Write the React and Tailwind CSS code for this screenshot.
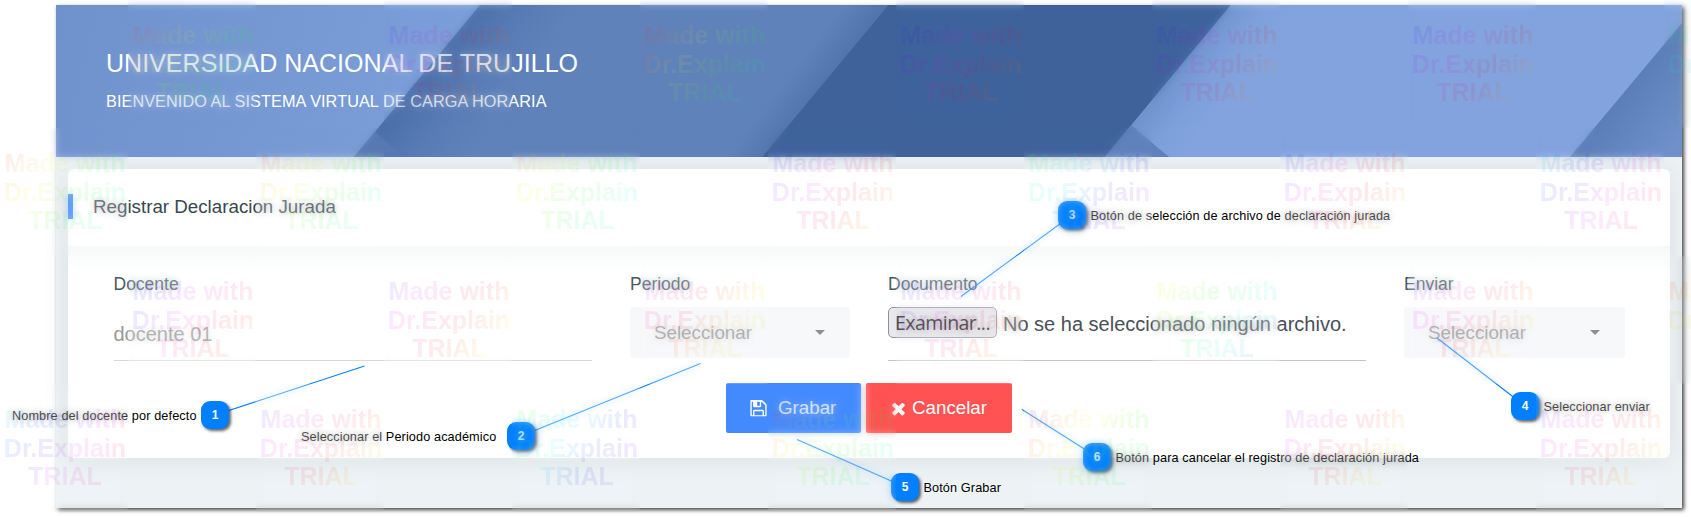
const WATERMARKS = [
  [128, 0, 355], [384, 0, 245], [640, 0, 350], [896, 0, 225], [1152, 0, 235], [1408, 0, 235], [1664, 0, 120],
  [0, 128, 0], [256, 128, 0], [512, 128, 15], [768, 128, 230], [1024, 128, 120], [1280, 128, 235], [1536, 128, 185],
  [128, 256, 215], [384, 256, 245], [640, 256, 280], [896, 256, 225], [1152, 256, 45], [1408, 256, 250], [1664, 256, 0],
  [0, 384, 180], [256, 384, 245], [512, 384, 110], [768, 384, 0], [1024, 384, 345], [1280, 384, 260], [1536, 384, 245],
];

function rainbow(start) {
  const stops = [];
  for (let i = 0; i <= 8; i++) stops.push(`hsl(${start + i * 25} 100% 52%)`);
  return `linear-gradient(130deg, ${stops.join(", ")})`;
}

function Watermark({ x, y, hue }) {
  return (
    <div className="absolute h-32 w-32" style={{ left: x, top: y }}>
      <div className="absolute inset-0 opacity-[0.37] backdrop-blur-[3.5px]" />
      <div className="relative flex h-full items-center justify-center pl-[2px]">
        <div
          className="bg-clip-text text-center text-[25px] leading-[28.7px] font-bold whitespace-nowrap text-transparent opacity-[0.085]"
          style={{ backgroundImage: rainbow(hue) }}
        >
          Made with
          <br />
          Dr.Explain
          <br />
          TRIAL
        </div>
      </div>
    </div>
  );
}

const NOTES = [
  { n: 1, x: 201, y: 401, tx: 364.5, ty: 366, text: "Nombre del docente por defecto", left: true, w: 189 },
  { n: 2, x: 507, y: 422, tx: 700.5, ty: 363.5, text: "Seleccionar el Periodo académico", left: true, w: 206 },
  { n: 3, x: 1058, y: 201, tx: 961, ty: 296.5, text: "Botón de selección de archivo de declaración jurada" },
  { n: 4, x: 1511, y: 392, tx: 1437, ty: 338, text: "Seleccionar enviar" },
  { n: 5, x: 891, y: 473, tx: 797, ty: 439.5, text: "Botón Grabar" },
  { n: 6, x: 1083, y: 443, tx: 1022, ty: 409.5, text: "Botón para cancelar el registro de declaración jurada" },
];

function Note({ note }) {
  return (
    <>
      <div
        className="absolute flex h-7 w-7 items-center justify-center rounded-[9px] bg-[#0080ff] text-[12px] font-bold text-white shadow-[2px_2px_3px_rgba(0,0,0,0.6)]"
        style={{ left: note.x, top: note.y }}
      >
        {note.n}
      </div>
      <div
        className="absolute h-7 text-[12.7px] leading-[30px] tracking-[0.11px] whitespace-nowrap text-black"
        style={{ left: note.left ? note.x - note.w : note.x + 32.5, top: note.y }}
      >
        {note.text}
      </div>
    </>
  );
}

function BannerArt() {
  return (
    <svg className="absolute inset-0 h-full w-full" viewBox="56 5 1626 152" preserveAspectRatio="none">
      <defs>
        <linearGradient id="a" gradientUnits="userSpaceOnUse" x1="56" y1="0" x2="440" y2="100">
          <stop offset="0" stopColor="#6f92cd" />
          <stop offset="1" stopColor="#7b9dd8" />
        </linearGradient>
        <linearGradient id="b" gradientUnits="userSpaceOnUse" x1="417" y1="81" x2="485" y2="132">
          <stop offset="0" stopColor="#4b6fa9" />
          <stop offset="0.5" stopColor="#587bb5" />
          <stop offset="1" stopColor="#6082bb" />
        </linearGradient>
        <linearGradient id="b2" gradientUnits="userSpaceOnUse" x1="800" y1="62" x2="825" y2="81">
          <stop offset="0" stopColor="#3f629b" stopOpacity="0" />
          <stop offset="1" stopColor="#3f629b" stopOpacity="0.4" />
        </linearGradient>
        <linearGradient id="d" gradientUnits="userSpaceOnUse" x1="1168" y1="81" x2="1215" y2="117">
          <stop offset="0" stopColor="#7093ce" />
          <stop offset="0.5" stopColor="#7d9fda" />
          <stop offset="1" stopColor="#82a3de" />
        </linearGradient>
        <linearGradient id="e" gradientUnits="userSpaceOnUse" x1="1626" y1="90" x2="1682" y2="135">
          <stop offset="0" stopColor="#5b7eb8" />
          <stop offset="1" stopColor="#6f90cb" />
        </linearGradient>
      </defs>
      <rect x="56" y="5" width="1626" height="152" fill="url(#a)" />
      <path d="M480 5H888L762 157H354Z" fill="url(#b)" />
      <path d="M480 5H888L762 157H354Z" fill="url(#b2)" />
      <path d="M375 132L405 157H354Z" fill="#5679b3" />
      <path d="M888 5H1231L1105 157H762Z" fill="#3f629b" />
      <path d="M1231 5H1682V157H1105Z" fill="url(#d)" />
      <path d="M1131 125L1169 157H1105Z" fill="#5f82bc" />
      <path d="M1682 23V157H1570Z" fill="url(#e)" />
    </svg>
  );
}

function Label({ children }) {
  return <label className="block h-[34px] text-[17.5px] leading-[22px] text-[#455a64]">{children}</label>;
}

function Select() {
  return (
    <div className="flex h-[51px] items-center justify-between rounded-[3px] bg-[#f7f8fa] pr-[25px] pl-6 text-[18.75px] text-[#999]">
      <span className="pt-[2px]">Seleccionar</span>
      <svg className="h-[5px] w-[10px]" viewBox="0 0 10 5">
        <path d="M0 0H10L5 5Z" fill="#8f8f8f" />
      </svg>
    </div>
  );
}

export default function App() {
  return (
    <div className="relative h-[517px] w-[1691px] overflow-hidden bg-white pt-[5px] pl-14 font-['Liberation_Sans',Arial,sans-serif]">
      <main className="h-[503px] w-[1626px] bg-[#edf3f5] shadow-[2px_2px_4px_rgba(0,0,0,0.75)]">
        <header className="relative h-[152px]">
          <BannerArt />
          <div className="relative pt-[43px] pl-[50px] text-white">
            <h1 className="text-[25px] leading-[30px] tracking-[0.035px]">UNIVERSIDAD NACIONAL DE TRUJILLO</h1>
            <p className="mt-[12px] text-[16.25px] leading-[22px] tracking-[0.07px]">
              BIENVENIDO AL SISTEMA VIRTUAL DE CARGA HORARIA
            </p>
          </div>
        </header>

        <section className="mt-3 ml-3 h-[289px] w-[1602px] overflow-visible rounded-[6px] bg-white shadow-[0_1px_25px_rgba(69,90,100,0.12)]">
          <div className="flex h-[77px] items-start pt-[25px]">
            <span className="h-[25px] w-[5px] bg-[#448aff]" />
            <h2 className="pl-5 text-[18.75px] leading-[26px] text-[#37474f]">Registrar Declaracion Jurada</h2>
          </div>

          <div className="bg-linear-to-b from-[#f7f9f9] to-white to-[26px] px-[26px] pt-[27px]">
            <div className="flex">
              <div className="w-[517px] pr-[19px] pl-[19.5px]">
                <Label>Docente</Label>
                <div className="h-[54px] border-b border-[#d8d8d8] text-[20px] leading-[54px] text-[#999]">docente 01</div>
              </div>
              <div className="w-[258px] px-[19px]">
                <Label>Periodo</Label>
                <Select />
              </div>
              <div className="w-[517px] pr-[20px] pl-[19px]">
                <Label>Documento</Label>
                <div className="flex h-[54px] items-start border-b border-[#c4c4c4]">
                  <button className="h-[31px] w-[109px] rounded-[5px] border border-[#8f8f9d] bg-[#e9e9ed] text-center font-['Open_Sans',sans-serif] text-[19.5px] leading-[29px] tracking-[-0.55px] whitespace-nowrap text-[#1c1b22]">
                    Examinar...
                  </button>
                  <span className="pl-[6px] text-[20px] leading-[35px] whitespace-nowrap text-[#495057]">
                    No se ha seleccionado ningún archivo.
                  </span>
                </div>
              </div>
              <div className="w-[258px] pr-[19px] pl-[18px]">
                <Label>Enviar</Label>
                <Select />
              </div>
            </div>
          </div>

          <div className="flex gap-[5px] pt-[22px] pl-[658px] text-[18.75px] text-white">
            <button className="flex h-[50px] w-[135px] items-center rounded-[2px] bg-[#448aff] pl-[23px]">
              <svg className="h-[19px] w-[19px]" viewBox="0 0 1792 1792" fill="currentColor">
                <path d="M512 1536h768v-384h-768v384zm896 0h128v-896q0-14-10-38.500t-20-34.500l-281-281q-10-10-34-20t-39-10v416q0 40-28 68t-68 28h-576q-40 0-68-28t-28-68v-416h-128v1280h128v-416q0-40 28-68t68-28h832q40 0 68 28t28 68v416zm-384-928v-320q0-13-9.500-22.500t-22.500-9.500h-192q-13 0-22.500 9.500t-9.500 22.500v320q0 13 9.500 22.500t22.500 9.500h192q13 0 22.500-9.500t9.500-22.500zm640 32v896q0 40-28 68t-68 28h-1344q-40 0-68-28t-28-68v-1344q0-40 28-68t68-28h928q40 0 88 20t76 48l280 280q28 28 48 76t20 88z" />
              </svg>
              <span className="pt-px pl-[10px]">Grabar</span>
            </button>
            <button className="flex h-[50px] w-[146px] items-center rounded-[2px] bg-[#ff5252] pl-[23px]">
              <svg className="h-[19px] w-[19px]" viewBox="0 0 1792 1792" fill="currentColor">
                <path d="M1490 1322q0 40-28 68l-136 136q-28 28-68 28t-68-28l-294-294-294 294q-28 28-68 28t-68-28l-136-136q-28-28-28-68t28-68l294-294-294-294q-28-28-28-68t28-68l136-136q28-28 68-28t68 28l294 294 294-294q28-28 68-28t68 28l136 136q28 28 28 68t-28 68l-294 294 294 294q28 28 28 68z" />
              </svg>
              <span className="pt-px pl-[4px]">Cancelar</span>
            </button>
          </div>
        </section>
      </main>

      <svg className="absolute inset-0 h-[517px] w-[1691px]" viewBox="0 0 1691 517">
        {NOTES.map((note) => (
          <line key={note.n} x1={note.x + 14} y1={note.y + 14} x2={note.tx} y2={note.ty} stroke="#0080ff" strokeWidth="1.1" />
        ))}
      </svg>
      {NOTES.map((note) => (
        <Note key={note.n} note={note} />
      ))}
      {WATERMARKS.map(([x, y, hue]) => (
        <Watermark key={`${x}-${y}`} x={x} y={y} hue={hue} />
      ))}
    </div>
  );
}
